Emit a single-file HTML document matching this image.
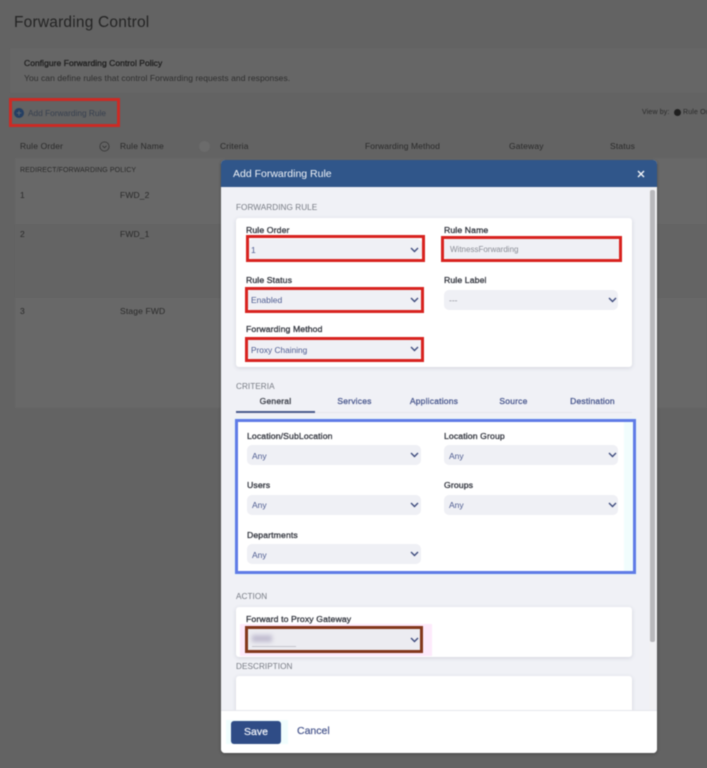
<!DOCTYPE html>
<html><head><meta charset="utf-8"><title>Add Forwarding Rule</title>
<style>
*{box-sizing:border-box}
html,body{margin:0;padding:0;width:707px;height:768px;overflow:hidden;background:#636363;font-family:"Liberation Sans",sans-serif}
#w{position:absolute;left:0;top:0;width:707px;height:768px;filter:blur(.45px);overflow:hidden}
#w div,#w svg{position:absolute}
.t{white-space:nowrap;line-height:12px;height:12px}
.bg{color:#2a2a2a;font-size:8.5px;letter-spacing:.15px}
.lb{color:#33363f;font-size:8.7px;letter-spacing:.1px;-webkit-text-stroke:.3px #33363f}
.sec{color:#777b84;font-size:8.2px;letter-spacing:.05px}
.sel{background:#eff0f5;border-radius:5px;height:20px}
.v{color:#4d5b90;font-size:8.5px;letter-spacing:0}
.tab{color:#4d5b90;font-size:8.5px;letter-spacing:.2px;text-align:center;-webkit-text-stroke:.3px #4d5b90}
.red{border:3px solid #d8231f}
.card{background:#fff;border-radius:3px;box-shadow:0 1px 4px rgba(80,85,110,.18)}
</style></head><body><div id="w">

<div style="left:10px;top:48px;width:697px;height:45px;background:#666"></div>
<div style="left:15px;top:158px;width:692px;height:250px;background:#686868"></div>
<div style="left:15px;top:224px;width:692px;height:74px;background:#646464"></div>

<div class="t" style="left:14px;top:13px;height:20px;line-height:20px;font-size:15.5px;color:#242424;letter-spacing:.2px">Forwarding Control</div>
<div class="t" style="left:24px;top:57px;font-size:8.5px;color:#202020;-webkit-text-stroke:.3px #202020;letter-spacing:.05px">Configure Forwarding Control Policy</div>
<div class="t" style="left:24px;top:72px;font-size:8.5px;color:#2e2e2e;letter-spacing:.07px">You can define rules that control Forwarding requests and responses.</div>

<div style="left:9px;top:98px;width:111px;height:29px;border:3px solid #cc2a24"></div>
<div style="left:14px;top:108px;width:10px;height:10px;border-radius:50%;background:#253f63"></div>
<div class="t" style="left:14px;top:107px;width:10px;text-align:center;font-size:9px;font-weight:bold;color:#5a6470">+</div>
<div class="t" style="left:28px;top:107px;font-size:8.3px;color:#37404f;letter-spacing:0">Add Forwarding Rule</div>

<div class="t bg" style="left:642px;top:107px;font-size:7px">View by:</div>
<div style="left:674px;top:109px;width:7px;height:7px;border-radius:50%;background:#1f1f1f"></div>
<div class="t bg" style="left:683px;top:107px;font-size:7px">Rule Order</div>

<div class="t bg" style="left:20px;top:140px">Rule Order</div>
<svg style="left:99px;top:141px" width="11" height="11" viewBox="0 0 11 11"><circle cx="5.5" cy="5.5" r="4.6" fill="none" stroke="#333" stroke-width=".8"/><path d="M3.5 4.8l2 2 2-2" fill="none" stroke="#333" stroke-width=".8"/></svg>
<div class="t bg" style="left:120px;top:140px">Rule Name</div>
<div style="left:199px;top:141px;width:11px;height:11px;border-radius:50%;background:#6b6b6b"></div>
<div class="t bg" style="left:220px;top:140px">Criteria</div>
<div class="t bg" style="left:365px;top:140px;letter-spacing:.1px">Forwarding Method</div>
<div class="t bg" style="left:509px;top:140px">Gateway</div>
<div class="t bg" style="left:610px;top:140px">Status</div>
<div class="t bg" style="left:20px;top:165px;font-size:7px;letter-spacing:.1px">REDIRECT/FORWARDING POLICY</div>
<div class="t bg" style="left:20px;top:189px">1</div>
<div class="t bg" style="left:120px;top:189px">FWD_2</div>
<div class="t bg" style="left:20px;top:228px">2</div>
<div class="t bg" style="left:120px;top:228px">FWD_1</div>
<div class="t bg" style="left:20px;top:305px">3</div>
<div class="t bg" style="left:120px;top:305px">Stage FWD</div>

<!-- modal -->
<div style="left:221px;top:160px;width:436px;height:593px;background:#f0f1f6;border-radius:4px;overflow:hidden;box-shadow:0 1px 3px rgba(0,0,0,.3)"></div>
<div style="left:221px;top:160px;width:436px;height:27px;background:#30568a;border-radius:4px 4px 0 0"></div>
<div class="t" style="left:233px;top:168px;font-size:10.5px;color:#eef2f7;letter-spacing:0">Add Forwarding Rule</div>
<svg style="left:637px;top:170px" width="8" height="8" viewBox="0 0 8 8"><path d="M1 1l6 6M7 1l-6 6" stroke="#f2f4f8" stroke-width="1.4"/></svg>

<div style="left:649px;top:187px;width:8px;height:523px;background:#f1f1f3"></div>
<div style="left:650px;top:190px;width:5px;height:452px;background:#b9b9bc;border-radius:2px"></div>

<div class="t sec" style="left:236px;top:202px">FORWARDING RULE</div>
<div class="card" style="left:236px;top:218px;width:396px;height:149px"></div>

<div class="t lb" style="left:246px;top:224px">Rule Order</div>
<div class="sel" style="left:248px;top:239px;width:174px"></div>
<div class="red" style="left:246px;top:235px;width:179px;height:27px"></div>
<div class="t v" style="left:251px;top:244px">1</div>
<svg style="left:410px;top:247px" width="9" height="6" viewBox="0 0 9 6"><path d="M1 1l3.5 3.5L8 1" fill="none" stroke="#3f4c7e" stroke-width="1.4"/></svg>

<div class="t lb" style="left:444px;top:224px">Rule Name</div>
<div class="sel" style="left:443px;top:239px;width:177px"></div>
<div class="red" style="left:441px;top:236px;width:181px;height:26px"></div>
<div class="t" style="left:450px;top:244px;font-size:8px;color:#8a8d96;letter-spacing:0">WitnessForwarding</div>

<div class="t lb" style="left:246px;top:274px">Rule Status</div>
<div class="sel" style="left:247px;top:290px;width:175px"></div>
<div class="red" style="left:245px;top:287px;width:179px;height:26px"></div>
<div class="t v" style="left:251px;top:294px">Enabled</div>
<svg style="left:410px;top:297px" width="9" height="6" viewBox="0 0 9 6"><path d="M1 1l3.5 3.5L8 1" fill="none" stroke="#3f4c7e" stroke-width="1.4"/></svg>

<div class="t lb" style="left:444px;top:274px">Rule Label</div>
<div class="sel" style="left:444px;top:290px;width:174px"></div>
<div class="t" style="left:449px;top:294px;font-size:8.5px;color:#8a8d96">---</div>
<svg style="left:608px;top:297px" width="9" height="6" viewBox="0 0 9 6"><path d="M1 1l3.5 3.5L8 1" fill="none" stroke="#3f4c7e" stroke-width="1.4"/></svg>

<div class="t lb" style="left:246px;top:323px">Forwarding Method</div>
<div class="sel" style="left:247px;top:339px;width:175px"></div>
<div class="red" style="left:245px;top:337px;width:179px;height:25px"></div>
<div class="t v" style="left:251px;top:344px;font-size:8.3px">Proxy Chaining</div>
<svg style="left:410px;top:346px" width="9" height="6" viewBox="0 0 9 6"><path d="M1 1l3.5 3.5L8 1" fill="none" stroke="#3f4c7e" stroke-width="1.4"/></svg>

<div class="t sec" style="left:236px;top:381px">CRITERIA</div>
<div style="left:236px;top:412px;width:396px;height:1px;background:#e5e6ec"></div>
<div style="left:236px;top:411px;width:79px;height:2px;background:#4a5a8c"></div>
<div class="t tab" style="left:236px;top:395px;width:79px;color:#3e414b;-webkit-text-stroke:.3px #3e414b">General</div>
<div class="t tab" style="left:315px;top:395px;width:79px">Services</div>
<div class="t tab" style="left:394px;top:395px;width:80px">Applications</div>
<div class="t tab" style="left:474px;top:395px;width:79px">Source</div>
<div class="t tab" style="left:553px;top:395px;width:79px">Destination</div>

<div style="left:235px;top:419px;width:401px;height:155px;background:#fff;border:3px solid #5f7be6;box-shadow:0 0 2px #d8fbfb"></div>
<div style="left:624px;top:422px;width:9px;height:149px;background:#f1fdfd"></div>

<div class="t lb" style="left:247px;top:430px">Location/SubLocation</div>
<div class="sel" style="left:247px;top:445px;width:174px"></div>
<div class="t v" style="left:252px;top:450px">Any</div>
<svg style="left:410px;top:452px" width="9" height="6" viewBox="0 0 9 6"><path d="M1 1l3.5 3.5L8 1" fill="none" stroke="#3f4c7e" stroke-width="1.4"/></svg>

<div class="t lb" style="left:444px;top:430px">Location Group</div>
<div class="sel" style="left:444px;top:445px;width:174px"></div>
<div class="t v" style="left:449px;top:450px">Any</div>
<svg style="left:608px;top:452px" width="9" height="6" viewBox="0 0 9 6"><path d="M1 1l3.5 3.5L8 1" fill="none" stroke="#3f4c7e" stroke-width="1.4"/></svg>

<div class="t lb" style="left:247px;top:479px">Users</div>
<div class="sel" style="left:247px;top:495px;width:174px"></div>
<div class="t v" style="left:252px;top:499px">Any</div>
<svg style="left:410px;top:502px" width="9" height="6" viewBox="0 0 9 6"><path d="M1 1l3.5 3.5L8 1" fill="none" stroke="#3f4c7e" stroke-width="1.4"/></svg>

<div class="t lb" style="left:444px;top:479px">Groups</div>
<div class="sel" style="left:444px;top:495px;width:174px"></div>
<div class="t v" style="left:449px;top:499px">Any</div>
<svg style="left:608px;top:502px" width="9" height="6" viewBox="0 0 9 6"><path d="M1 1l3.5 3.5L8 1" fill="none" stroke="#3f4c7e" stroke-width="1.4"/></svg>

<div class="t lb" style="left:247px;top:529px">Departments</div>
<div class="sel" style="left:247px;top:544px;width:174px"></div>
<div class="t v" style="left:252px;top:549px">Any</div>
<svg style="left:410px;top:551px" width="9" height="6" viewBox="0 0 9 6"><path d="M1 1l3.5 3.5L8 1" fill="none" stroke="#3f4c7e" stroke-width="1.4"/></svg>

<div class="t sec" style="left:236px;top:591px">ACTION</div>
<div class="card" style="left:236px;top:607px;width:396px;height:50px"></div>
<div class="t lb" style="left:246px;top:613px">Forward to Proxy Gateway</div>
<div style="left:240px;top:624px;width:192px;height:32px;background:#fdeafb"></div>
<div style="left:245px;top:626px;width:178px;height:27px;background:#ececf1;border:3px solid #83371b"></div>
<div style="left:252px;top:635px;width:20px;height:7px;background:#c0bcd0;filter:blur(2px)"></div>
<div style="left:252px;top:646px;width:44px;height:1px;background:#c4c4cc"></div>
<svg style="left:410px;top:637px" width="9" height="6" viewBox="0 0 9 6"><path d="M1 1l3.5 3.5L8 1" fill="none" stroke="#3f4c7e" stroke-width="1.4"/></svg>

<div class="t sec" style="left:236px;top:661px">DESCRIPTION</div>
<div class="card" style="left:236px;top:676px;width:396px;height:50px"></div>

<div style="left:221px;top:710px;width:436px;height:43px;background:#fff;border-top:1px solid #e6e7ec;border-radius:0 0 4px 4px"></div>
<div style="left:226px;top:720px;width:62px;height:24px;background:#f0fdfd"></div>
<div class="t" style="left:231px;top:721px;width:50px;height:23px;line-height:23px;background:#2f4c86;border-radius:3px;color:#e8ecf5;font-size:10.5px;-webkit-text-stroke:.3px #e8ecf5;text-align:center">Save</div>
<div class="t" style="left:297px;top:725px;font-size:10.5px;color:#4d5b90;-webkit-text-stroke:.25px #4d5b90">Cancel</div>

</div></body></html>
